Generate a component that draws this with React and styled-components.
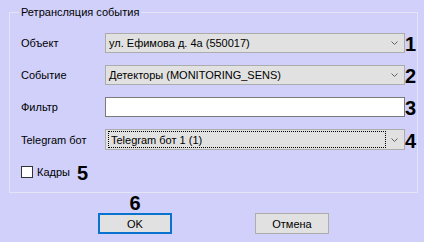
import React from "react";
import styled, { createGlobalStyle } from "styled-components";

const Global = createGlobalStyle`
  html, body { margin: 0; padding: 0; background: #d0d0fb; }
  body { font-family: "Liberation Sans", Arial, sans-serif; }
`;

const Page = styled.div`
  width: 424px;
  height: 242px;
  box-sizing: border-box;
  padding: 5px 0 0 9px;
  background: #d0d0fb;
  color: #000;
  font-size: 11px;
  overflow: hidden;
`;

const Group = styled.fieldset`
  box-sizing: border-box;
  width: 409px;
  height: 188px;
  margin: 0;
  padding: 14px 0 0 11px;
  border: 1px solid #e4e4f6;
  min-width: 0;
`;

const Legend = styled.legend`
  padding: 0 2px;
  margin-left: -2px;
  line-height: 14px;
  font-size: 11px;
`;

const Form = styled.div`
  display: grid;
  grid-template-columns: 84px 300px auto;
  row-gap: 12px;
  align-items: center;
`;

const Label = styled.div`
  line-height: 14px;
`;

const Combo = styled.div`
  box-sizing: border-box;
  height: ${(p) => (p.$tall ? 21 : 20)}px;
  display: flex;
  align-items: center;
  background: #e1e1e1;
  border: 1px solid #acacac;
  padding: 0 6px 0 2px;
`;

const ComboText = styled.div`
  flex: 1;
  padding-left: 1px;
  line-height: 14px;
  white-space: nowrap;
`;

const Focus = styled.div`
  flex: 1;
  align-self: stretch;
  margin: 1px 5px 1px 0;
  border: 1px dotted #000;
  padding-left: 2px;
  display: flex;
  align-items: center;
`;

const TextBox = styled.div`
  box-sizing: border-box;
  height: 20px;
  background: #fff;
  border: 1px solid #7a7a7a;
`;

const Num = styled.div`
  box-sizing: border-box;
  height: 20px;
  padding-top: 3px;
  font: bold 20px/16px "Liberation Sans", Arial, sans-serif;
`;

const CheckRow = styled.div`
  display: flex;
  align-items: center;
  height: 20px;
  margin-top: 12px;
`;

const Box = styled.div`
  box-sizing: border-box;
  width: 12px;
  height: 12px;
  background: #fff;
  border: 1px solid #333;
  margin-right: 4px;
`;

const CheckNum = styled(Num)`
  padding-left: 7px;
`;

const Footer = styled.div`
  display: flex;
  align-items: flex-end;
  padding-left: 89px;
  margin-top: 1px;
  gap: 83px;
`;

const ButtonCol = styled.div`
  display: flex;
  flex-direction: column;
  align-items: center;
`;

const BigNum = styled.div`
  font: bold 20px/18px "Liberation Sans", Arial, sans-serif;
  margin-bottom: 1px;
`;

const Button = styled.div`
  box-sizing: border-box;
  width: 74px;
  height: 21px;
  display: flex;
  align-items: center;
  justify-content: center;
  background: #e1e1e1;
  border: ${(p) => (p.$default ? "2px solid #0a73d0" : "1px solid #adadad")};
  line-height: 14px;
`;

const Chevron = () => (
  <svg width="7" height="4" viewBox="0 0 7 4">
    <path d="M0.5 0.5 L3.5 3.5 L6.5 0.5" fill="none" stroke="#606060" strokeWidth="1" />
  </svg>
);

export default function App() {
  return (
    <Page>
      <Global />
      <Group>
        <Legend>Ретрансляция события</Legend>
        <Form>
          <Label>Объект</Label>
          <Combo>
            <ComboText>ул. Ефимова д. 4а (550017)</ComboText>
            <Chevron />
          </Combo>
          <Num>1</Num>

          <Label>Событие</Label>
          <Combo>
            <ComboText>Детекторы (MONITORING_SENS)</ComboText>
            <Chevron />
          </Combo>
          <Num>2</Num>

          <Label>Фильтр</Label>
          <TextBox />
          <Num>3</Num>

          <Label>Telegram бот</Label>
          <Combo $tall>
            <Focus>Telegram бот 1 (1)</Focus>
            <Chevron />
          </Combo>
          <Num>4</Num>
        </Form>
        <CheckRow>
          <Box />
          <span>Кадры</span>
          <CheckNum>5</CheckNum>
        </CheckRow>
      </Group>
      <Footer>
        <ButtonCol>
          <BigNum>6</BigNum>
          <Button $default>OK</Button>
        </ButtonCol>
        <Button>Отмена</Button>
      </Footer>
    </Page>
  );
}
